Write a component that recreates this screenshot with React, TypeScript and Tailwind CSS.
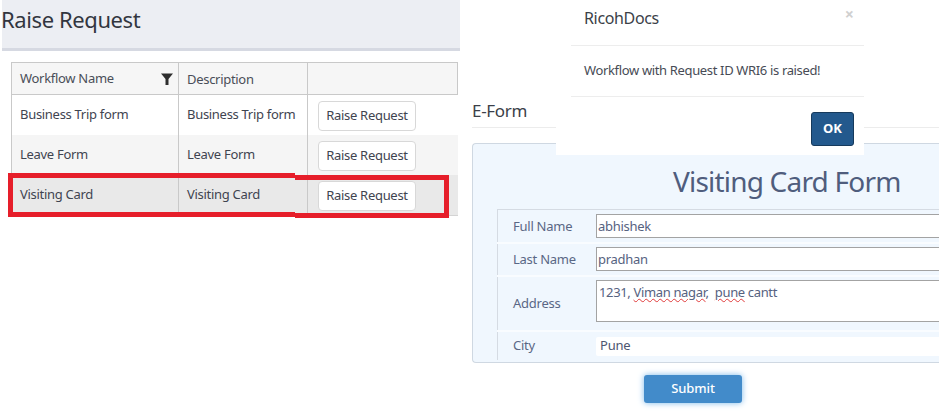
import React from "react";

const font = { fontFamily: '"Noto Sans", "Open Sans", sans-serif' };

function Btn() {
  return (
    <div className="mt-[1px] flex h-[30px] w-[98px] items-center justify-center rounded-[4px] border border-[#d8d8d8] bg-white text-[13px] tracking-[-0.3px] text-[#3f4450]">
      Raise Request
    </div>
  );
}

function Row({ name, bg, h, last }: { name: string; bg: string; h: string; last?: boolean }) {
  return (
    <div className={`flex ${h} ${bg} ${last ? "border-b border-[#d4d4d4]" : ""}`}>
      <div className="flex w-[167px] items-center border-r border-[#c9c9c9] pl-[8px] text-[13px] tracking-[-0.3px] text-[#3f4450]">{name}</div>
      <div className="flex w-[129px] items-center whitespace-nowrap border-r border-[#c9c9c9] pl-[8px] text-[13px] tracking-[-0.3px] text-[#3f4450]">{name}</div>
      <div className="flex flex-1 items-center pl-[10px]"><Btn /></div>
    </div>
  );
}

function FormRow({ label, h, labelClass, children }: { label: string; h: string; labelClass?: string; children: React.ReactNode }) {
  return (
    <div className={`flex ${h} items-center border-l border-[#d5dbe3] mb-[2px] bg-[#f0f7fe]`}>
      <div className={`w-[98px] shrink-0 pl-[15px] text-[13px] tracking-[-0.25px] text-[#5a6785] ${labelClass ?? ""}`}>{label}</div>
      {children}
    </div>
  );
}

export default function App() {
  return (
    <div style={font} className="relative flex h-[419px] w-[951px] overflow-hidden bg-white">
      <div className="w-[460px] shrink-0 pl-[2px]">
        <div className="flex h-[51px] items-start border-b-[3px] border-[#d6d9e2] bg-[#eceef3]">
          <h1 className="-ml-[1px] mt-[4px] text-[22px] leading-[30px] tracking-[-0.4px] text-[#32363f]">Raise Request</h1>
        </div>
        <div className="ml-[9px] mr-[2px] mt-[11px] border-l border-t border-[#c9c9c9]">
          <div className="flex h-[32px] border-b border-[#c9c9c9] bg-[#f6f6f6]">
            <div className="flex w-[167px] items-center justify-between border-r border-[#c9c9c9] pl-[8px] pr-[5px] text-[13px] tracking-[-0.3px] text-[#4a4e58]">
              <span>Workflow Name</span>
              <svg width="12" height="12" viewBox="0 0 12 12"><path d="M0 0.5h12L7.5 6v6h-3V6z" fill="#2e2e2e" /></svg>
            </div>
            <div className="flex w-[129px] items-center border-r border-[#c9c9c9] pl-[8px] pt-[2px] text-[13px] tracking-[-0.3px] text-[#4a4e58]">Description</div>
            <div className="flex-1 border-r border-[#c9c9c9]" />
          </div>
          <Row name="Business Trip form" bg="bg-white" h="h-[40px]" />
          <Row name="Leave Form" bg="bg-[#f5f5f5]" h="h-[40px]" />
          <Row name="Visiting Card" bg="bg-[#e9e9e9]" h="h-[41px]" last />
        </div>
      </div>

      <div className="w-[479px] shrink-0 pl-[12px]">
        <div className="mt-[99px] h-[29px] border-b border-[#ececec] text-[17px] leading-[24px] tracking-[-0.3px] text-[#3b3f48]">E-Form</div>
        <div className="mt-[15px] h-[220px] overflow-hidden rounded-l-[4px] border-y border-l border-[#cfd8e2] bg-[#f0f7fe] pl-[24px]">
          <div className="h-[65px] pl-[176px] pt-[16px] text-[28px] leading-[42px] tracking-[-0.8px] text-[#4f5d7d] whitespace-nowrap">Visiting Card Form</div>
          <div className="border-t border-[#d5dbe3] bg-[#f9fcff]">
            <FormRow label="Full Name" h="h-[32px]" labelClass="pt-[1px]">
              <input readOnly value="abhishek" className="-mr-[10px] h-[24px] flex-1 border border-[#a3a3a3] bg-white px-[1px] text-[13px] tracking-[-0.3px] text-[#56627f] outline-none" />
            </FormRow>
            <FormRow label="Last Name" h="h-[31px]">
              <input readOnly value="pradhan" className="-mr-[10px] -mt-[1px] h-[24px] flex-1 border border-[#a3a3a3] bg-white px-[1px] text-[13px] tracking-[-0.3px] text-[#56627f] outline-none" />
            </FormRow>
            <FormRow label="Address" h="h-[53px]">
              <div className="-mr-[10px] -mt-[6px] h-[42px] flex-1 whitespace-pre border border-[#a3a3a3] bg-white pl-[2px] pt-[1px] text-[13px] leading-[20px] tracking-[-0.35px] text-[#56627f]">
                <span>1231, </span>
                <span className="underline decoration-wavy decoration-[#e03a3a] decoration-1 underline-offset-1">Viman nagar</span>
                <span>,  </span>
                <span className="underline decoration-wavy decoration-[#e03a3a] decoration-1 underline-offset-1">pune</span>
                <span> cantt</span>
              </div>
            </FormRow>
            <FormRow label="City" h="h-[28px]">
              <div className="-mr-[10px] flex h-[19px] flex-1 items-center rounded-[2px] bg-white pl-[4px] text-[13px] tracking-[-0.2px] text-[#4d5670]">Pune</div>
            </FormRow>
          </div>
        </div>
        <div className="mt-[12px] flex pl-[172px]">
          <div className="flex h-[28px] w-[98px] items-center justify-center rounded-[3px] bg-[#428bca] text-[13px] font-medium tracking-[-0.1px] text-white shadow-[0_0_6px_#7ab8ea]">Submit</div>
        </div>
      </div>

      {/* red highlight over the selected row, its two halves one pixel apart */}
      <div className="absolute left-[8px] top-[173px] h-[44px] w-[287px] border-y-[5px] border-l-[5px] border-[#e61e2a]" />
      <div className="absolute left-[295px] top-[175px] h-[43px] w-[154px] border-y-[5px] border-r-[5px] border-[#e61e2a]" />

      {/* modal over the page */}
      <div className="absolute left-[556px] top-0 h-[155px] w-[308px] bg-white pl-[15px]">
        <div className="flex h-[46px] items-start justify-between border-b border-[#ededed] pl-[13px] pr-[10px]">
          <span className="mt-[6px] text-[16px] leading-[24px] tracking-[-0.35px] text-[#3b3f48]">RicohDocs</span>
          <span className="mt-[6px] text-[16px] font-bold leading-none text-[#d0d0d0]">×</span>
        </div>
        <div className="flex h-[51px] items-center border-b border-[#ededed] pl-[13px] text-[13px] tracking-[-0.35px] text-[#474b55]">
          Workflow with Request ID WRI6 is raised!
        </div>
        <div className="flex justify-end pr-[10px] pt-[15px]">
          <div className="flex h-[34px] w-[43px] items-center justify-center rounded-[3px] border border-[#163a5c] bg-[#23598d] text-[13px] font-bold text-white">OK</div>
        </div>
      </div>
    </div>
  );
}
